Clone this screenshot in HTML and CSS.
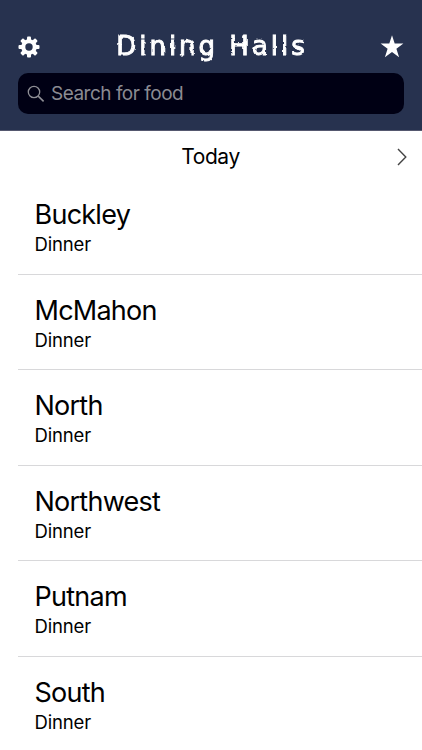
FILE: index.html
```html
<!DOCTYPE html>
<html lang="en">
<head>
    <meta charset="UTF-8">
    <meta name="viewport" content="width=device-width, initial-scale=1">
    <title>Dining Halls</title>
    <link rel="stylesheet" href="styles.css">
</head>
<body>
    <header class="header">
        <div class="navbar">
            <button class="icon-btn" aria-label="Settings">
                <svg class="gear" viewBox="0 0 22 22">
                    <g fill="#fff">
                        <rect x="9" y="0.5" width="4" height="21" rx="1"/>
                        <rect x="9" y="0.5" width="4" height="21" rx="1" transform="rotate(45 11 11)"/>
                        <rect x="9" y="0.5" width="4" height="21" rx="1" transform="rotate(90 11 11)"/>
                        <rect x="9" y="0.5" width="4" height="21" rx="1" transform="rotate(135 11 11)"/>
                        <circle cx="11" cy="11" r="7.8"/>
                    </g>
                    <circle cx="11" cy="11" r="3.7" fill="#27324f"/>
                </svg>
            </button>
            <h1 class="title">Dining Halls</h1>
            <button class="icon-btn" aria-label="Favorites">
                <svg class="star" viewBox="0 0 24 23">
                    <path fill="#fff" d="M12 0.3 L14.7 8.6 H23.4 L16.4 13.8 L19.1 22.2 L12 17 L4.9 22.2 L7.6 13.8 L0.6 8.6 H9.3 Z"/>
                </svg>
            </button>
        </div>
        <div class="search">
            <svg class="search-icon" viewBox="0 0 18 18">
                <circle cx="7" cy="7" r="5.7" fill="none" stroke="#8f8f96" stroke-width="1.3"/>
                <path d="M11.2 11.2 L16.6 16.4" stroke="#8f8f96" stroke-width="1.6"/>
            </svg>
            <span class="placeholder">Search for food</span>
        </div>
    </header>

    <div class="day-bar">
        <span class="day">Today</span>
        <svg class="chevron" viewBox="0 0 10 18">
            <path d="M1 1 L8.8 9 L1 17" fill="none" stroke="#444" stroke-width="1.4"/>
        </svg>
    </div>

    <ul class="halls">
        <li class="hall">
            <span class="name">Buckley</span>
            <span class="meal">Dinner</span>
        </li>
        <li class="hall">
            <span class="name">McMahon</span>
            <span class="meal">Dinner</span>
        </li>
        <li class="hall">
            <span class="name">North</span>
            <span class="meal">Dinner</span>
        </li>
        <li class="hall">
            <span class="name">Northwest</span>
            <span class="meal">Dinner</span>
        </li>
        <li class="hall">
            <span class="name">Putnam</span>
            <span class="meal">Dinner</span>
        </li>
        <li class="hall">
            <span class="name">South</span>
            <span class="meal">Dinner</span>
        </li>
    </ul>

    <!-- rough edges for the title -->
    <svg width="0" height="0">
        <filter id="chalk">
            <feTurbulence type="fractalNoise" baseFrequency="0.18" numOctaves="2" seed="4"/>
            <feDisplacementMap in="SourceGraphic" scale="2.5" xChannelSelector="R" yChannelSelector="G"/>
        </filter>
    </svg>
</body>
</html>
```

FILE: styles.css
```css
* {
    margin: 0;
    padding: 0;
    box-sizing: border-box;
}

body {
    height: 750px;
    overflow: hidden;
    font-family: Inter, "Liberation Sans", sans-serif;
    background-color: #fff;
    color: #000;
}

.header {
    height: 131px;
    padding: 24px 18px 0;
    background-color: #27324f;
    border-bottom: 1px solid #55586f;
}

.navbar {
    display: flex;
    justify-content: space-between;
    align-items: center;
    height: 44px;
}

.icon-btn {
    display: flex;
    background: none;
    border: none;
    cursor: pointer;
}

.gear {
    width: 22px;
    height: 22px;
    margin-top: 1px;
}

.star {
    width: 24px;
    height: 23px;
}

/* Chalk lettering */
.title {
    font-family: Chalkduster, "DejaVu Sans", sans-serif;
    font-size: 26px;
    font-weight: normal;
    line-height: 44px;
    letter-spacing: 3px;
    padding-left: 4px;
    color: #fff;
    -webkit-text-stroke: 0.9px #fff;
    filter: url(#chalk);
}

.search {
    display: flex;
    align-items: center;
    width: 386px;
    height: 41px;
    margin-top: 5px;
    padding-left: 9px;
    border-radius: 10px;
    background-color: #000014;
}

.search-icon {
    width: 18px;
    height: 18px;
    margin-right: 6px;
}

.placeholder {
    margin-top: -1px;
    font-size: 19px;
    line-height: 39px;
    letter-spacing: -0.5px;
    color: #8b8b92;
}

.day-bar {
    display: flex;
    justify-content: flex-end;
    align-items: center;
    height: 48px;
    padding: 4px 15px 0 0;
}

.day {
    flex: 1;
    margin-top: -2px;
    padding-left: 24px;
    font-size: 21px;
    letter-spacing: -0.4px;
    text-align: center;
}

.chevron {
    width: 10px;
    height: 18px;
}

.halls {
    list-style: none;
    margin-left: 17.5px;
}

.hall {
    display: flex;
    flex-direction: column;
    height: 95.5px;
    padding: 19px 0 0 17px;
    border-bottom: 1px solid #d8d8da;
}

.name {
    font-size: 27px;
    line-height: 34px;
    letter-spacing: -0.75px;
}

.meal {
    font-size: 18.5px;
    line-height: 25px;
    letter-spacing: -0.15px;
}
```
